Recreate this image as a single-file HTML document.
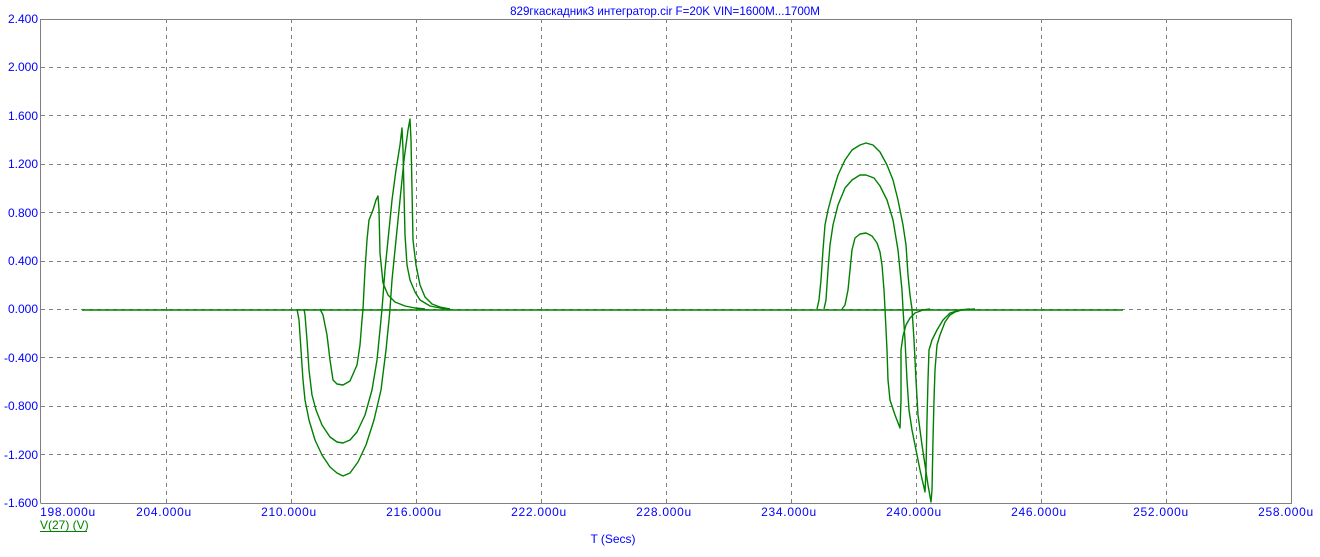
<!DOCTYPE html>
<html><head><meta charset="utf-8"><style>
body{margin:0;background:#fff;width:1320px;height:557px;overflow:hidden}
svg{display:block}
text{font-family:"Liberation Sans",sans-serif;font-size:12px;fill:#0000ff}
.xl text{letter-spacing:0.7px}
</style></head><body>
<svg width="1320" height="557" viewBox="0 0 1320 557">
<text x="665" y="15" text-anchor="middle" style="font-size:11.6px">829гкаскадник3 интегратор.cir F=20K VIN=1600M...1700M</text>
<g stroke="#808080" stroke-width="1" stroke-dasharray="4,4" fill="none">
<path d="M166.5 19V503M291.5 19V503M416.5 19V503M541.5 19V503M666.5 19V503M791.5 19V503M916.5 19V503M1041.5 19V503M1166.5 19V503"/>
<path d="M41 67.5H1291M41 115.5H1291M41 164.5H1291M41 212.5H1291M41 261.5H1291M41 309.5H1291M41 357.5H1291M41 406.5H1291M41 454.5H1291"/>
</g>
<path d="M40.5 503V19.5H1291.5V503.5H40.5" stroke="#808080" fill="none" stroke-width="1"/>
<g text-anchor="end">
<text x="38" y="23">2.400</text><text x="38" y="71">2.000</text><text x="38" y="120">1.600</text><text x="38" y="168">1.200</text><text x="38" y="217">0.800</text><text x="38" y="265">0.400</text><text x="38" y="313">0.000</text><text x="38" y="362">-0.400</text><text x="38" y="410">-0.800</text><text x="38" y="459">-1.200</text><text x="38" y="507">-1.600</text>
</g>
<g text-anchor="middle" class="xl">
<text x="68" y="516">198.000u</text><text x="164" y="516">204.000u</text><text x="289" y="516">210.000u</text><text x="414" y="516">216.000u</text><text x="539" y="516">222.000u</text><text x="664" y="516">228.000u</text><text x="789" y="516">234.000u</text><text x="914" y="516">240.000u</text><text x="1039" y="516">246.000u</text><text x="1161" y="516">252.000u</text><text x="1286" y="516">258.000u</text>
</g>
<text x="613" y="543" text-anchor="middle">T (Secs)</text>
<text x="40" y="529" style="fill:#008000">V(27) (V)</text>
<path d="M40 531.5H87" stroke="#008000"/>
<g stroke="#008000" stroke-width="1.4" fill="none" stroke-linejoin="round">
<path d="M82 310H1123"/>
<path d="M320 309L323 315L327 335L330 360L333 380L337 384L343 385L350 381L357 365L360 345L362 320L363 309L365 270L367 240L369 220L373 210L376 200L378 196L379 210L380 253L383 283L388 295L395 302L405 306L415 308L425 309"/>
<path d="M304 309L305 315L307 340L309 370L312 395L316 410L322 425L330 437L337 442L343 443L350 440L357 432L365 415L372 390L377 360L380 330L382 309L385 270L388 240L392 200L396 170L400 145L402 128L403 150L405 235L407 265L410 280L415 292L420 300L430 306L440 308L450 309"/>
<path d="M297 309L299 320L301 350L303 380L305 400L309 420L315 440L322 455L330 467L337 473L343 476L350 473L358 462L366 445L374 420L381 390L386 350L389 320L390 309L392 280L395 250L400 200L404 160L408 130L410 119L411 140L413 240L416 265L420 285L425 297L432 304L440 307L450 309"/>
<path d="M817 309L819 300L821 280L823 250L825 225L828 210L832 195L838 175L845 160L852 150L860 145L866 143L873 145L880 152L887 165L893 180L898 200L903 225L906 245L908 275L910 295L912 309L914 340L916 380L918 415L922 445L925 465L928 485L931 502L932 490L933 440L934 400L935 370L937 345L940 335L945 322L950 315L955 312L962 310L975 309"/>
<path d="M824 309L826 300L828 270L830 245L833 225L838 205L845 188L852 180L860 175L866 175L874 178L880 186L887 200L893 220L898 250L900 270L902 290L903 309L905 340L907 380L909 410L912 430L915 445L920 470L925 492L926 470L927 420L928 380L929 350L932 340L937 330L943 320L950 313L960 310L970 309"/>
<path d="M842 309L845 305L848 290L850 270L852 250L855 238L860 234L866 233L872 236L877 243L880 252L882 265L884 290L885 309L887 350L888 380L890 400L895 415L900 428L901 400L901 350L903 336L906 325L910 318L915 313L923 310L930 309"/>
</g>
</svg>
</body></html>
